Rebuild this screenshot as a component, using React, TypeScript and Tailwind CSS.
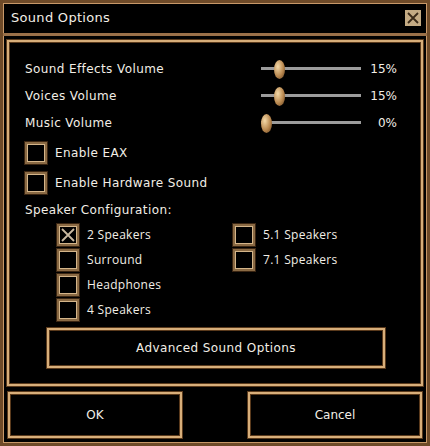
import React from 'react';

const font = { fontFamily: '"DejaVu Sans", "Liberation Sans", sans-serif' };
const serif = { fontFamily: '"Open Sans", "DejaVu Sans", sans-serif' };

const Slider: React.FC<{ value: number }> = ({ value }) => (
  <div className="relative w-[100px] h-[20px] flex items-center">
    <div className="w-full h-[3px] bg-[#9c9c9c]" />
    <div
      className="absolute top-[1px] w-[11px] h-[19px] rounded-[50%] bg-[radial-gradient(ellipse_at_35%_35%,#f4d9a8,#b8874e_55%,#5a3a1c)]"
      style={{ left: `${value * 0.89}px` }}
    />
  </div>
);

const Check: React.FC<{ checked?: boolean }> = ({ checked }) => (
  <div className="w-[22px] h-[22px] border-[2px] border-[#8a6a44] shadow-[inset_0_0_0_1px_#d4b58a,0_0_0_1px_#3a2512] bg-black flex items-center justify-center">
    {checked && (
      <svg width="16" height="16" viewBox="0 0 16 16">
        <path d="M2 2 L14 14 M14 2 L2 14" stroke="#c8b8a0" strokeWidth="1.8" />
      </svg>
    )}
  </div>
);

const Frame = 'border-[2px] border-[#d7ae7a] shadow-[0_0_0_1px_#5a3a1c,inset_0_0_0_1px_#5a3a1c]';

export default function App() {
  const volumes = [
    { label: 'Sound Effects Volume', value: 15 },
    { label: 'Voices Volume', value: 15 },
    { label: 'Music Volume', value: 0 },
  ];
  return (
    <div
      className="w-[430px] h-[446px] bg-black border-[3px] border-[#6e4a28] shadow-[inset_0_0_0_1px_#c89868] flex flex-col text-[#f2eee6] text-[12px]"
      style={font}
    >
      {/* title */}
      <div className="h-[33px] shrink-0 flex items-center justify-between pl-[8px] pr-[6px] border-b-[3px] border-[#9a7048]">
        <span className="text-[13px] tracking-[0.3px]">Sound Options</span>
        <div className="w-[16px] h-[16px] bg-[#c4ab84] flex items-center justify-center">
          <svg width="12" height="12" viewBox="0 0 12 12">
            <path d="M1 1 L11 11 M11 1 L1 11" stroke="#3a2a18" strokeWidth="1.8" />
          </svg>
        </div>
      </div>

      {/* panel */}
      <div className={`mx-[4px] mt-[4px] h-[346px] ${Frame} flex flex-col pl-[16px] pt-[13px]`}>
        {volumes.map(v => (
          <div key={v.label} className="h-[27px] flex items-center">
            <span className="w-[236px] tracking-[0.4px]">{v.label}</span>
            <Slider value={v.value} />
            <span className="w-[36px] text-right">{v.value}%</span>
          </div>
        ))}
        <div className="h-[30px] flex items-center gap-[8px] mt-[2px]">
          <Check />
          <span className="tracking-[0.4px]">Enable EAX</span>
        </div>
        <div className="h-[30px] flex items-center gap-[8px]">
          <Check />
          <span className="tracking-[0.4px]">Enable Hardware Sound</span>
        </div>
        <div className="h-[24px] flex items-center tracking-[0.4px]">Speaker Configuration:</div>
        <div className="flex pl-[32px]" style={serif}>
          <div className="w-[176px] flex flex-col">
            {['2 Speakers', 'Surround', 'Headphones', '4 Speakers'].map((s, i) => (
              <div key={s} className="h-[25px] flex items-center gap-[8px]">
                <Check checked={i === 0} />
                <span className="tracking-[0.3px]">{s}</span>
              </div>
            ))}
          </div>
          <div className="flex flex-col">
            {['5.1 Speakers', '7.1 Speakers'].map(s => (
              <div key={s} className="h-[25px] flex items-center gap-[8px]">
                <Check />
                <span className="tracking-[0.3px]">{s}</span>
              </div>
            ))}
          </div>
        </div>
        <div className={`mt-[6px] ml-[22px] w-[338px] h-[40px] ${Frame} flex items-center justify-center tracking-[0.4px]`}>
          Advanced Sound Options
        </div>
      </div>

      {/* buttons */}
      <div className="flex justify-between px-[5px] mt-[6px]">
        <div className={`w-[174px] h-[46px] ${Frame} flex items-center justify-center`}>OK</div>
        <div className={`w-[174px] h-[46px] ${Frame} flex items-center justify-center`}>Cancel</div>
      </div>
    </div>
  );
}
